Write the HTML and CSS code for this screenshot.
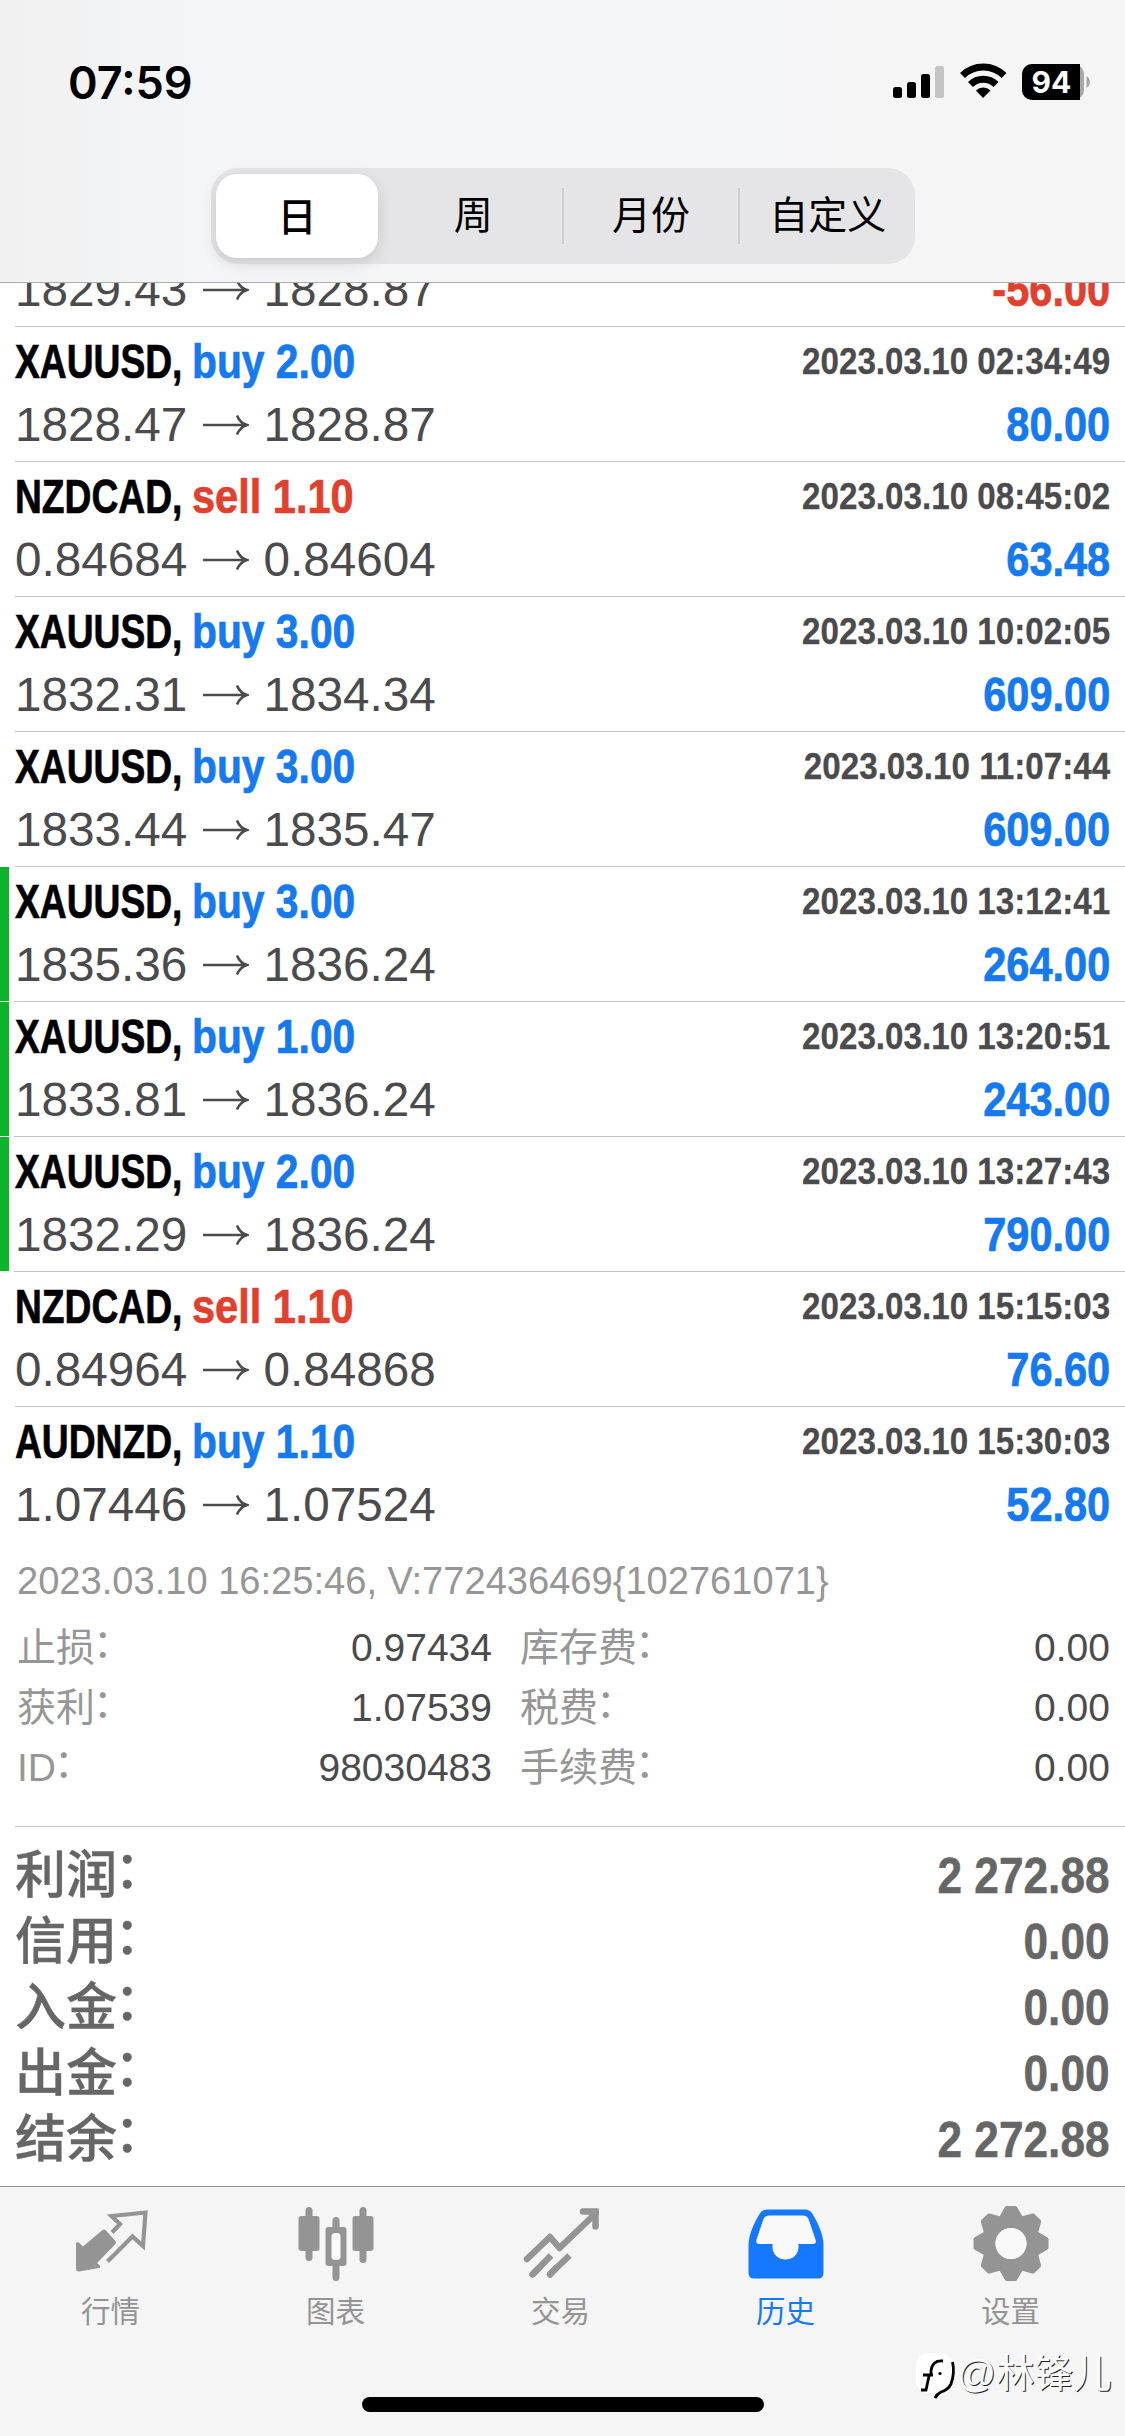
FILE: index.html
```
<!DOCTYPE html>
<html lang="zh-CN">
<head>
<meta charset="utf-8">
<title>历史</title>
<link rel="stylesheet" href="styles.css">
</head>
<body>
<div class="screen">
  <header class="header">
    <div class="status">
      <span class="clock">07:59</span>
      <svg class="status-icons" width="200" height="40" viewBox="0 0 200 40">
        <rect x="0" y="25" width="9" height="11" rx="2.5"/>
        <rect x="14" y="20" width="9" height="16" rx="2.5"/>
        <rect x="28" y="12" width="9" height="24" rx="2.5"/>
        <rect x="42" y="4" width="9" height="32" rx="2.5" fill="#c3c3c3"/>
        <g fill="none" stroke="#000">
          <path d="M69.500 13.500a29.500 29.500 0 0 1 41.500 0" stroke-width="7"/>
          <path d="M77.500 22.500a18 18 0 0 1 25.500 0" stroke-width="7"/>
        </g>
        <path d="M90 36l-7-7.500a10.500 10.500 0 0 1 14.500 0z"/>
        <rect x="129" y="2" width="62" height="36" rx="10" fill="#a8a8a8"/>
        <path d="M139 2h48v36h-48a10 10 0 0 1-10-10V12a10 10 0 0 1 10-10z"/>
        <path d="M193.500 14a7 7 0 0 1 0 12z" fill="#a8a8a8"/>
        <text x="158.500" y="31" text-anchor="middle" class="battery">94</text>
      </svg>
    </div>
    <nav class="segments">
      <span class="segment active">日</span>
      <span class="segment">周</span>
      <span class="segment divided">月份</span>
      <span class="segment divided">自定义</span>
    </nav>
  </header>

  <main class="list">
    <svg class="defs" width="0" height="0"><symbol id="arrow" viewBox="0 0 46 22"><path d="M0 11h43M34 1.500c2 5 5 8 10 9.500c-5 1.500-8 4.500-10 9.500" fill="none" stroke="currentColor" stroke-width="2.600"/></symbol></svg>
    <article class="deal clipped"><div class="prices">1829.43<svg class="arrow"><use href="#arrow"/></svg>1828.87</div><div class="profit loss">-56.00</div></article>
    <article class="deal"><div class="title"><b>XAUUSD,</b> <span class="buy">buy 2.00</span></div><time>2023.03.10 02:34:49</time><div class="prices">1828.47<svg class="arrow"><use href="#arrow"/></svg>1828.87</div><div class="profit">80.00</div></article>
    <article class="deal"><div class="title"><b>NZDCAD,</b> <span class="sell">sell 1.10</span></div><time>2023.03.10 08:45:02</time><div class="prices">0.84684<svg class="arrow"><use href="#arrow"/></svg>0.84604</div><div class="profit">63.48</div></article>
    <article class="deal"><div class="title"><b>XAUUSD,</b> <span class="buy">buy 3.00</span></div><time>2023.03.10 10:02:05</time><div class="prices">1832.31<svg class="arrow"><use href="#arrow"/></svg>1834.34</div><div class="profit">609.00</div></article>
    <article class="deal"><div class="title"><b>XAUUSD,</b> <span class="buy">buy 3.00</span></div><time>2023.03.10 11:07:44</time><div class="prices">1833.44<svg class="arrow"><use href="#arrow"/></svg>1835.47</div><div class="profit">609.00</div></article>
    <article class="deal marked"><div class="title"><b>XAUUSD,</b> <span class="buy">buy 3.00</span></div><time>2023.03.10 13:12:41</time><div class="prices">1835.36<svg class="arrow"><use href="#arrow"/></svg>1836.24</div><div class="profit">264.00</div></article>
    <article class="deal marked"><div class="title"><b>XAUUSD,</b> <span class="buy">buy 1.00</span></div><time>2023.03.10 13:20:51</time><div class="prices">1833.81<svg class="arrow"><use href="#arrow"/></svg>1836.24</div><div class="profit">243.00</div></article>
    <article class="deal marked"><div class="title"><b>XAUUSD,</b> <span class="buy">buy 2.00</span></div><time>2023.03.10 13:27:43</time><div class="prices">1832.29<svg class="arrow"><use href="#arrow"/></svg>1836.24</div><div class="profit">790.00</div></article>
    <article class="deal"><div class="title"><b>NZDCAD,</b> <span class="sell">sell 1.10</span></div><time>2023.03.10 15:15:03</time><div class="prices">0.84964<svg class="arrow"><use href="#arrow"/></svg>0.84868</div><div class="profit">76.60</div></article>
    <article class="deal last"><div class="title"><b>AUDNZD,</b> <span class="buy">buy 1.10</span></div><time>2023.03.10 15:30:03</time><div class="prices">1.07446<svg class="arrow"><use href="#arrow"/></svg>1.07524</div><div class="profit">52.80</div></article>

    <section class="details">
      <p class="note">2023.03.10 16:25:46, V:772436469{102761071}</p>
      <dl class="facts">
        <dt>止损<i>：</i></dt><dd>0.97434</dd><dt>库存费<i>：</i></dt><dd>0.00</dd>
        <dt>获利<i>：</i></dt><dd>1.07539</dd><dt>税费<i>：</i></dt><dd>0.00</dd>
        <dt>ID<i>：</i></dt><dd>98030483</dd><dt>手续费<i>：</i></dt><dd>0.00</dd>
      </dl>
    </section>

    <dl class="totals">
      <dt>利润<i>：</i></dt><dd>2 272.88</dd>
      <dt>信用<i>：</i></dt><dd>0.00</dd>
      <dt>入金<i>：</i></dt><dd>0.00</dd>
      <dt>出金<i>：</i></dt><dd>0.00</dd>
      <dt>结余<i>：</i></dt><dd>2 272.88</dd>
    </dl>
  </main>

  <footer class="footer">
    <nav class="tabs">
      <a class="tab"><svg width="76" height="76" viewBox="0 0 76 76">
        <path d="M29.500 25q1.500-1 3 0L42.500 36q1 1.500 0 3L25 57q-1.500 1 0 2l2 1.500q1 2-1 2.500L6 66.500q-3 0-3-3V38q1.500-1.500 4 .5l3 3z" fill="currentColor"/>
        <path d="M39 27.500L47 19L38.500 11L72.500 7.500L70 41L59.500 31.500L34.500 56.500" fill="none" stroke="currentColor" stroke-width="4.200"/>
      </svg>行情</a>
      <a class="tab"><svg width="76" height="76" viewBox="0 0 76 76" fill="currentColor">
        <rect x="7.500" y="2" width="7" height="54" rx="3.500"/><rect x=".5" y="11" width="21" height="35" rx="3"/>
        <rect x="61.500" y="2" width="7" height="56" rx="3.500"/><rect x="54.500" y="11" width="21" height="35" rx="3"/>
        <rect x="34.500" y="12" width="7" height="64" rx="3.500"/><rect x="27.500" y="22" width="21" height="39" rx="3"/>
        <rect x="33.500" y="28" width="9" height="27" rx="3.500" fill="#f9f9f9"/>
      </svg>图表</a>
      <a class="tab"><svg width="76" height="76" viewBox="0 0 76 76" fill="none" stroke="currentColor" stroke-width="6.500">
        <path d="M4 54L27 32L36.500 43L73 8" stroke-linejoin="round" stroke-linecap="round"/>
        <path d="M60 6.500H72.500V21.500" stroke-linecap="round"/>
        <path d="M28 50.500L9.500 69.500M46.500 50.500L26.500 69.500" stroke-linecap="butt"/>
        <path d="M15 64L9.500 69.500M33 63L27 69.500" stroke-linecap="round"/>
      </svg>交易</a>
      <a class="tab current"><svg width="76" height="76" viewBox="0 0 76 76">
        <path fill="currentColor" d="M19 4.500H57Q62 4.500 64.500 9C70 18 75 29 75.500 39V68Q75.500 73.500 70 73.500H6Q.5 73.500 .5 68V39C1 29 6 18 11.500 9Q14 4.500 19 4.500z"/>
        <path fill="#f9f9f9" d="M21 10.500Q17 10.500 15.500 14L8.500 34.500Q7.500 39 11 39H24.500V42C24.500 50 31 54.500 37.500 54.500S50.500 50 50.500 42V39H65Q69 39 67.500 34.500L60.500 14Q59 10.500 55 10.500z"/>
      </svg>历史</a>
      <a class="tab"><svg width="76" height="76" viewBox="0 0 76 76">
        <g fill="currentColor" stroke="currentColor" stroke-width="5" stroke-linejoin="round">
          <path id="tooth" d="M34 3.500h8L48 14H28z"/>
          <use href="#tooth" transform="rotate(45 38 38.500)"/><use href="#tooth" transform="rotate(90 38 38.500)"/><use href="#tooth" transform="rotate(135 38 38.500)"/><use href="#tooth" transform="rotate(180 38 38.500)"/><use href="#tooth" transform="rotate(225 38 38.500)"/><use href="#tooth" transform="rotate(270 38 38.500)"/><use href="#tooth" transform="rotate(315 38 38.500)"/>
        </g>
        <circle cx="38" cy="38.500" r="22" fill="none" stroke="currentColor" stroke-width="13"/>
        <circle cx="38" cy="38.500" r="15.500" fill="#f9f9f9"/>
      </svg>设置</a>
    </nav>
    <div class="home-bar"></div>
    <div class="watermark">
      <svg width="43" height="50" viewBox="0 0 43 50">
        <rect x="2" y="2" width="37" height="40" rx="13" fill="#fff"/>
        <path d="M38.500 11Q41 22 37 33Q34 39 27 41Q23 43 21 47" fill="none" stroke="#000" stroke-width="2.800"/>
        <path d="M29 10Q18 9 17 20V23M9 24H19M15 25L12 39H7" fill="none" stroke="#000" stroke-width="2.800"/>
        <circle cx="26" cy="22.500" r="1.600"/>
      </svg><span>@林锋儿</span>
    </div>
  </footer>
</div>
</body>
</html>
```
FILE: styles.css
```
* { box-sizing: border-box; }
body, p, dl, dd { margin: 0; }
body {
  background: #fff;
  font-family: "Liberation Sans", "Noto Sans CJK SC", sans-serif;
  color: #4b4b4d;
}
.screen {
  width: 1125px;
  height: 2436px;
  display: flex;
  flex-direction: column;
  overflow: hidden;
}

/* Top bar */
.header {
  flex: none;
  height: 283px;
  border-bottom: 1px solid #aeaeb0;
  background: linear-gradient(90deg, #f1f1f2, #f4f5f6 18%, #f5f5f6);
}
.status {
  height: 168px;
  padding: 56px 32px 0 68px;
  display: flex;
  justify-content: space-between;
  align-items: flex-start;
}
.clock {
  font: 600 45px/53px Inter, sans-serif;
  color: #000;
}
.status-icons { margin-top: 6px; }
.battery { font: 700 30px Inter, sans-serif; fill: #fff; }
.segments {
  width: 704px;
  height: 96px;
  margin-left: 211px;
  padding: 6px 0 6px 5px;
  display: flex;
  align-items: center;
  border-radius: 27px;
  background: #e5e5e7;
}
.segment {
  width: 177px;
  line-height: 56px;
  text-align: center;
  font-size: 39px;
  color: #000;
}
.segment.active {
  width: 162px;
  height: 84px;
  margin-right: 7px;
  line-height: 80px;
  border-radius: 21px;
  background: #fff;
  font-family: "Noto Sans CJK SC", sans-serif;
  font-weight: 500;
  box-shadow: 0 5px 16px rgba(0, 0, 0, .13);
}
.segment.divided { border-left: 2px solid #cfcfd2; }

/* Deals */
.list { flex: 1; min-height: 0; }
.defs { display: block; }
.deal {
  height: 135px;
  margin-left: 15px;
  padding-right: 15px;
  border-bottom: 1px solid #c4c4c6;
  display: grid;
  grid-template-columns: 1fr auto;
  grid-template-rows: 69px 57px;
}
.deal.clipped {
  height: 44px;
  overflow: hidden;
  grid-template-rows: 57px;
  align-content: end;
  padding-bottom: 8px;
}
.deal.last { border-bottom-color: transparent; }
.deal.marked {
  margin-left: 0;
  padding-left: 15px;
  background: linear-gradient(#0db32b, #0db32b) 0 0 / 9px 100% no-repeat;
  border-image: linear-gradient(90deg, #fff 15px, #c4c4c6 15px) 1;
  border-width: 0 0 1px;
}
.title {
  display: flex;
  font-size: 48px;
  line-height: 69px;
  font-weight: 700;
  white-space: nowrap;
}
.title b {
  width: 177px;
  color: #000;
  transform: scaleX(.775);
  transform-origin: 0 0;
}
.title b, .title span, .profit { -webkit-text-stroke: .7px currentColor; }
.title span { transform: scaleX(.85); transform-origin: 0 0; }
.title .sell { transform: scaleX(.865); }
.buy { color: #1579f0; }
.sell { color: #e2402f; }
time {
  font-size: 37.5px;
  line-height: 68px;
  font-weight: 700;
  transform: scaleX(.885);
  transform-origin: 100% 0;
  -webkit-text-stroke: .3px currentColor;
}
.prices {
  display: flex;
  align-items: center;
  font-size: 47.7px;
  line-height: 57px;
}
.arrow { width: 46px; height: 22px; margin: 0 14px 0 16px; }
.profit {
  font-size: 48px;
  line-height: 57px;
  font-weight: 700;
  color: #1579f0;
  text-align: right;
  transform: scaleX(.865);
  transform-origin: 100% 0;
}
.loss { color: #e2402f; }

/* Expanded deal */
.details {
  height: 285px;
  margin-left: 15px;
  padding: 6px 15px 0 2px;
  border-bottom: 1px solid #c4c4c6;
  color: #969696;
  font-size: 39px;
}
.note { font-size: 38.1px; line-height: 66px; white-space: nowrap; }
.facts {
  display: grid;
  grid-template-columns: 200px 275px 269px 1fr;
  grid-auto-rows: 60px;
  line-height: 60px;
  padding-top: 4px;
}
.facts dt:nth-of-type(even) { padding-left: 28px; }
.facts dd { text-align: right; color: #4b4b4d; }

/* Label colons sit at the middle of the characters */
dt i { font-style: normal; position: relative; left: -.05em; top: -.1em; }

/* Totals */
.totals {
  padding: 16px 15px 0 15px;
  display: grid;
  grid-template-columns: 1fr auto;
  grid-auto-rows: 66px;
  line-height: 66px;
  font-weight: 700;
  color: #666;
}
.totals dt { font-size: 51px; font-weight: 500; -webkit-text-stroke: .4px currentColor; }
.totals dd { font-size: 50px; text-align: right; transform: scaleX(.885); transform-origin: 100% 0; -webkit-text-stroke: .5px currentColor; }

/* Bottom bar */
.footer {
  flex: none;
  height: 250px;
  position: relative;
  border-top: 1px solid #8e8e90;
  background: #f5f5f5;
}
.tabs { display: grid; grid-template-columns: repeat(5, 225px); padding-top: 18px; margin-left: -2px; }
.tab {
  display: flex;
  flex-direction: column;
  align-items: center;
  font-size: 29.5px;
  line-height: 50px;
  color: #949494;
}
.tab svg { margin-bottom: 6px; }
.tab.current { color: #1677ff; }
.home-bar {
  width: 402px;
  height: 15px;
  margin: 60px auto 0;
  border-radius: 8px;
  background: #000;
}
.watermark {
  position: absolute;
  left: 914px;
  top: 164px;
  display: flex;
  align-items: flex-start;
  font-size: 38.5px;
  line-height: 46px;
  color: #fbfbfb;
  text-shadow: 1px 1px .5px #222;
}
```
